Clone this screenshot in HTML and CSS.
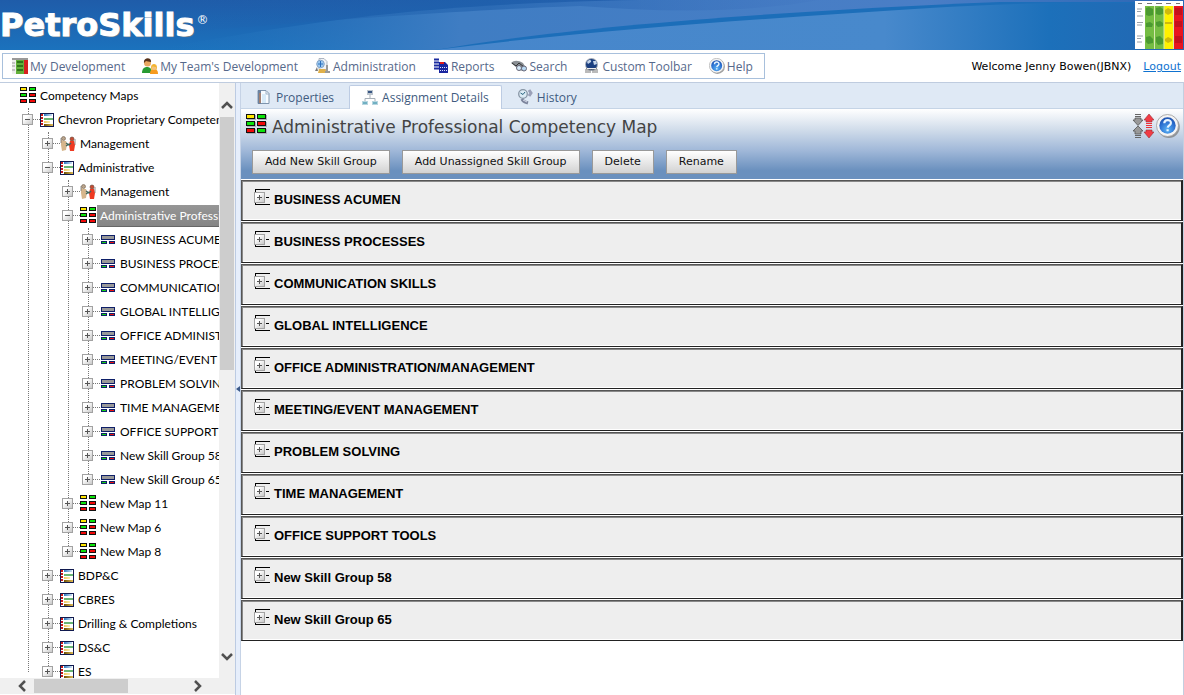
FILE: index.html
```html
<!DOCTYPE html>
<html lang="en">
<head>
<meta charset="utf-8">
<title>PetroSkills - Competency Maps</title>
<link rel="stylesheet" href="styles.css">
</head>
<body>
<svg class="defs" aria-hidden="true">
  <defs>
    <linearGradient id="gTog" x1="0" y1="0" x2="1" y2="1"><stop offset="0.3" stop-color="#fff"/><stop offset="1" stop-color="#c4c4c4"/></linearGradient>
    <radialGradient id="gBlue" cx="0.5" cy="0.75" r="0.8"><stop offset="0" stop-color="#5cb4f6"/><stop offset="0.6" stop-color="#2a6fd0"/><stop offset="1" stop-color="#1c4ba6"/></radialGradient>
    <linearGradient id="gB1"><stop offset="0" stop-color="#2e78c0"/><stop offset="1" stop-color="#cfe4f6"/></linearGradient>
    <linearGradient id="gB2"><stop offset="0" stop-color="#f0c860"/><stop offset="1" stop-color="#fff0b0"/></linearGradient>
    <linearGradient id="gB3"><stop offset="0" stop-color="#6e4e00"/><stop offset="1" stop-color="#e0bc58"/></linearGradient>
  </defs>
  <symbol id="plus" viewBox="0 0 11 12"><rect x=".5" y=".5" width="10" height="10" fill="url(#gTog)" stroke="#a2a2a2"/><path d="M3 5.5h5M5.500 3v5" stroke="#555"/></symbol>
  <symbol id="minus" viewBox="0 0 11 12"><rect x=".5" y=".5" width="10" height="10" fill="url(#gTog)" stroke="#a2a2a2"/><path d="M3 5.5h5" stroke="#555"/></symbol>
  <symbol id="map" viewBox="0 0 16 18">
    <path d="M0 0h7v4H0zM9 0h7v4H9zM0 6h7v4H0zM9 6h7v4H9zM0 12h7v4H0zM9 12h7v4H9z" fill="#111"/>
    <path d="M1 1h5v2H1z" fill="#ffe600"/><path d="M10 1h5v2h-5zM1 7h5v2H1z" fill="#0be30b"/><path d="M10 7h5v2h-5zM1 13h5v2H1zM10 13h5v2h-5z" fill="#f00808"/>
  </symbol>
  <symbol id="bigmap" viewBox="0 0 22 20">
    <path d="M1 1h9v5H1zM12 1h9v5H12zM1 8h9v5H1zM12 8h9v5H12zM1 15h9v5H1zM12 15h9v5H12z" fill="#a9b0b8"/>
    <path d="M0 0h9v5H0zM11 0h9v5h-9zM0 7h9v5H0zM11 7h9v5h-9zM0 14h9v5H0zM11 14h9v5h-9z" fill="#111"/>
    <path d="M1 1h7v3H1z" fill="#ffe600"/><path d="M12 1h7v3h-7zM1 8h7v3H1zM12 15h7v3h-7z" fill="#0be30b"/><path d="M12 8h7v3h-7zM1 15h7v3H1z" fill="#f00808"/>
  </symbol>
  <symbol id="list" viewBox="0 0 14 14">
    <rect x=".5" y=".5" width="13" height="13" fill="#fff" stroke="#10194e"/>
    <path d="M2 1v12" stroke="#c81818" stroke-width="2" stroke-dasharray="2 1"/>
    <path fill="url(#gB1)" d="M4 1h8v2H4z"/><path fill="#69b573" d="M4 5h9v2H4z"/><path fill="url(#gB2)" d="M4 8h6v2H4z"/><path fill="url(#gB3)" d="M4 11h9v2H4z"/>
  </symbol>
  <symbol id="group" viewBox="0 0 16 10">
    <path d="M1 0h14v5H1zM1 6h6v3H1zM9 6h6v3H9z" fill="#0e1f68"/><path d="M2 1h12v3H2z" fill="#999"/><path d="M2 7h4v1H2z" fill="#12d612"/><path d="M10 7h4v1h-4z" fill="#f01010"/>
  </symbol>
  <symbol id="mgmt" viewBox="0 0 16 16">
    <circle cx="3.500" cy="2.500" r="2" fill="#b9a48c" stroke="#6d5c4a" stroke-width=".6"/><circle cx="12" cy="3" r="2" fill="#c74b32" stroke="#5b4033" stroke-width=".6"/>
    <path d="M1 3l2 2 3 0 1 3-1 6-4 1-1-6z" fill="#d6b68c"/><path d="M10 5l4 0 1 4-1 6-4 0-1-6z" fill="#ee3a22"/><path d="M1 2v5M15 3v6" stroke="#777" stroke-width=".8"/>
    <path d="M6 7l3 2 2-2M6 10l3-2" stroke="#3c655c" fill="none" stroke-width="1.300"/>
  </symbol>
  <symbol id="help" viewBox="0 0 24 24">
    <circle cx="12.800" cy="13" r="11" fill="#777" opacity=".7"/><circle cx="11.500" cy="11.500" r="11" fill="#f4f4f4" stroke="#999" stroke-width=".8"/>
    <circle cx="11.500" cy="11.500" r="8.200" fill="url(#gBlue)"/><path d="M8.300 9.300c0-4.300 6.700-4.200 6.600-.4 0 2.400-3 2.400-3.200 4.700M11.600 15.200v2" fill="none" stroke="#e8f5ff" stroke-width="2.200"/>
  </symbol>
  <symbol id="rowtog" viewBox="0 0 16 16"><path d="M1 .5h15M1 15.500h15M1.500 0v4M1.500 13v3M12 8.500h3" stroke="#000" fill="none"/><svg x="0" y="3" width="11" height="12"><use href="#plus"/></svg></symbol>
</svg>

<header class="banner">
  <svg class="banner-art" viewBox="0 0 1184 50" preserveAspectRatio="none" aria-hidden="true">
    <defs>
      <linearGradient id="bg" x1="0" x2="0" y1="0" y2="1"><stop offset="0" stop-color="#1f5ca9"/><stop offset="1" stop-color="#1b72bd"/></linearGradient>
      <linearGradient id="sw1" x1="0" x2="1"><stop offset="0" stop-color="#1b74be" stop-opacity="0"/><stop offset=".3" stop-color="#3f7dc3"/><stop offset=".75" stop-color="#4a7ec6"/><stop offset="1" stop-color="#2b66b4"/></linearGradient>
      <linearGradient id="sw2" x1="0" x2="1"><stop offset="0" stop-color="#4786cb"/><stop offset=".6" stop-color="#4889cc"/><stop offset=".82" stop-color="#1c70ba"/><stop offset="1" stop-color="#2466b1"/></linearGradient>
      <linearGradient id="top" x1="0" x2="1"><stop offset="0" stop-color="#2060ad" stop-opacity="0"/><stop offset=".5" stop-color="#2061ad"/><stop offset="1" stop-color="#3b6dbc" stop-opacity=".2"/></linearGradient>
    </defs>
    <rect width="1184" height="50" fill="url(#bg)"/>
    <path d="M150 50C320 20 420 4 640 0H1184V50z" fill="url(#sw1)"/>
    <path d="M160 0H820C740 14 660 12 580 6C460 10 330 20 160 34z" fill="url(#top)" opacity=".65"/>
    <path d="M435 50C560 28 760 12 1000 2H1184V50z" fill="#1c6eb9"/>
    <path d="M435 50C600 29 760 19 930 8C1010 3 1100 1 1184 5V50z" fill="url(#sw2)"/>
  </svg>
  <h1 class="logo">PetroSkills<sup>®</sup></h1>
  <svg class="matrix" viewBox="0 0 48 48" aria-hidden="true">
    <path fill="#fff" d="M0 0h48v48H0z"/><path fill="#75bd43" d="M10 5h19v43H10z"/><path fill="#fff100" d="M29 5h9v43h-9z"/><path fill="#e8151f" d="M39 5h9v43h-9z"/>
    <path d="M19.500 5v43M29 5v43M38.500 5v43" stroke="#d6e8b0"/>
    <path d="M3 2.500h4M12 2.500h5M21 2.500h6M31 2.500h5M41 2.500h4" stroke="#777"/>
    <path d="M2 8h5M2 10.500h4M2 15h6M2 21.500h6M2 24h5M2 35h6M2 37.500h4M2 41h5" stroke="#9aa0a8"/>
    <path d="M11 7l3-1 4 2v6l-4 1-3-1zM21 7l4-1 3 2v5l-4 1-3-1zM11 22l4-1 3 2-1 3-6 0zM21 21l4-1 3 2v3l-5 1-2-2zM11 36l4-1 3 3v4l-5 1-2-2zM21 36l4-1 3 3v5l-5 1-2-3z" fill="#4b9a30"/>
    <path d="M30 9l3-2 4 2v3l-4 2-3-2zM30 21h7v2h-7zM30 38l3-2 4 2v2l-4 2-3-2z" fill="#cfb90c"/><path d="M40 7h7v7h-7zM40 20h7v6h-7zM40 35h7v7h-7z" fill="#c4101d"/>
  </svg>
</header>

<div class="topbar">
  <nav class="menu">
    <a href="#"><svg viewBox="0 0 16 16"><path fill="#eee" d="M0 0h16v16H0z"/><path fill="#62b03a" d="M4 2h8v14H4z"/><path fill="#d62020" d="M12 2h4v14h-4z"/><path d="M0 1h16" stroke="#444"/><path d="M5 4h6M5 8h6M5 12h6" stroke="#30751b" stroke-width="2"/><path d="M0 5h3M0 8h3M0 12h3" stroke="#999"/></svg>My Development</a>
    <a href="#"><svg viewBox="0 0 16 16"><path d="M0 15c0-4 2-6 5-6s5 2 5 6z" fill="#279a32"/><circle cx="5.500" cy="5" r="3.500" fill="#e8a862"/><path d="M2 5c-1-6 8-6 7-1-2 0-4-1-5-1z" fill="#55311a"/><path d="M8 16c0-3 1-5 4-5s4 2 4 5z" fill="#f79b1e"/><circle cx="12" cy="9" r="3" fill="#f4c27b"/><path d="M9 13c-1-9 7-9 6 0l-1-4c-2 0-3-1-4 0z" fill="#f4b62c"/></svg>My Team's Development</a>
    <a href="#"><svg viewBox="0 0 16 16"><path d="M4 .5h5l3 3v8H4z" fill="#f1f3f6" stroke="#9aa4b4" stroke-width=".8"/><circle cx="5.500" cy="6" r="3.800" fill="#9cc9f2" stroke="#86a5c6"/><path d="M5.500 3v6M3 6h5" stroke="#2d70bd"/><path d="M2 9l-2 4h3z" fill="#777"/><path d="M4 11h6l3 4H3z" fill="#dfb04a"/><path d="M12 7v7M10 14h5" stroke="#999" stroke-width="2" fill="none"/></svg>Administration</a>
    <a href="#"><svg viewBox="0 0 16 16"><path fill="#fff" d="M1 1h6v12H1z"/><path d="M1 1.500h5M1 4.500h5M1 7.500h5M1 10.500h5" stroke="#1c2ca0" stroke-width="2"/><path d="M6 4h6l3 3v8H6z" fill="#1825a0"/><path d="M7 5h4" stroke="#e01b1b" stroke-width="2"/><path d="M7 9.500h7M7 12.500h7" stroke="#dfe4ff" stroke-dasharray="1 1"/></svg>Reports</a>
    <a href="#"><svg viewBox="0 0 16 16"><path d="M0 5c3-3 7-3 12 0l3 5-3 3-4-1-3-3z" fill="#8a8f94"/><path d="M1 5l4 3 3-3 5 4" stroke="#333" fill="none"/><circle cx="8" cy="10" r="2.500" fill="#d5e9f8" stroke="#667"/><circle cx="13" cy="10.500" r="2.500" fill="#b7d8f2" stroke="#667"/></svg>Search</a>
    <a href="#"><svg viewBox="0 0 16 16"><circle cx="7.500" cy="6.500" r="6.500" fill="#9fa8b5"/><circle cx="7.500" cy="6.500" r="5.500" fill="#1b3f80"/><path d="M3 4c2-3 5-2 4 0l-3 2zM9 3l3 0 1 3-3 1z" fill="#c5d5ea"/><path d="M2 15v-4l2-1v5M6 15v-4h3v4M11 15v-5l2 1v4" stroke="#777" fill="none"/><path d="M3 10.500h9" stroke="#eee"/></svg>Custom Toolbar</a>
    <a href="#"><svg viewBox="0 0 24 24"><use href="#help"/></svg>Help</a>
  </nav>
  <div class="user"><span>Welcome Jenny Bowen(JBNX)</span><a href="#">Logout</a></div>
</div>

<div class="work">
  <aside class="side">
    <div class="tree-row-area">
      <div class="tree-view">
        <div class="node root"><svg class="i-map"><use href="#map"/></svg><a href="#">Competency Maps</a></div>
        <ul class="tree first">
          <li><div class="node"><button class="tog" aria-label="Collapse"><svg><use href="#minus"/></svg></button><svg class="i-list"><use href="#list"/></svg><a href="#">Chevron Proprietary Competencies</a></div>
            <ul class="tree">
              <li><div class="node"><button class="tog" aria-label="Expand"><svg><use href="#plus"/></svg></button><svg class="i-mgmt"><use href="#mgmt"/></svg><a href="#">Management</a></div></li>
              <li><div class="node"><button class="tog" aria-label="Collapse"><svg><use href="#minus"/></svg></button><svg class="i-list"><use href="#list"/></svg><a href="#">Administrative</a></div>
                <ul class="tree">
                  <li><div class="node"><button class="tog" aria-label="Expand"><svg><use href="#plus"/></svg></button><svg class="i-mgmt"><use href="#mgmt"/></svg><a href="#">Management</a></div></li>
                  <li><div class="node"><button class="tog" aria-label="Collapse"><svg><use href="#minus"/></svg></button><svg class="i-map"><use href="#map"/></svg><a class="selected" href="#">Administrative Professional</a></div>
                    <ul class="tree">
                      <li><div class="node"><button class="tog" aria-label="Expand"><svg><use href="#plus"/></svg></button><svg class="i-group"><use href="#group"/></svg><a href="#">BUSINESS ACUMEN</a></div></li>
                      <li><div class="node"><button class="tog" aria-label="Expand"><svg><use href="#plus"/></svg></button><svg class="i-group"><use href="#group"/></svg><a href="#">BUSINESS PROCESSES</a></div></li>
                      <li><div class="node"><button class="tog" aria-label="Expand"><svg><use href="#plus"/></svg></button><svg class="i-group"><use href="#group"/></svg><a href="#">COMMUNICATION SKILLS</a></div></li>
                      <li><div class="node"><button class="tog" aria-label="Expand"><svg><use href="#plus"/></svg></button><svg class="i-group"><use href="#group"/></svg><a href="#">GLOBAL INTELLIGENCE</a></div></li>
                      <li><div class="node"><button class="tog" aria-label="Expand"><svg><use href="#plus"/></svg></button><svg class="i-group"><use href="#group"/></svg><a href="#">OFFICE ADMINISTRATION</a></div></li>
                      <li><div class="node"><button class="tog" aria-label="Expand"><svg><use href="#plus"/></svg></button><svg class="i-group"><use href="#group"/></svg><a href="#">MEETING/EVENT MANAGEMENT</a></div></li>
                      <li><div class="node"><button class="tog" aria-label="Expand"><svg><use href="#plus"/></svg></button><svg class="i-group"><use href="#group"/></svg><a href="#">PROBLEM SOLVING</a></div></li>
                      <li><div class="node"><button class="tog" aria-label="Expand"><svg><use href="#plus"/></svg></button><svg class="i-group"><use href="#group"/></svg><a href="#">TIME MANAGEMENT</a></div></li>
                      <li><div class="node"><button class="tog" aria-label="Expand"><svg><use href="#plus"/></svg></button><svg class="i-group"><use href="#group"/></svg><a href="#">OFFICE SUPPORT TOOLS</a></div></li>
                      <li><div class="node"><button class="tog" aria-label="Expand"><svg><use href="#plus"/></svg></button><svg class="i-group"><use href="#group"/></svg><a href="#">New Skill Group 58</a></div></li>
                      <li><div class="node"><button class="tog" aria-label="Expand"><svg><use href="#plus"/></svg></button><svg class="i-group"><use href="#group"/></svg><a href="#">New Skill Group 65</a></div></li>
                    </ul>
                  </li>
                  <li><div class="node"><button class="tog" aria-label="Expand"><svg><use href="#plus"/></svg></button><svg class="i-map"><use href="#map"/></svg><a href="#">New Map 11</a></div></li>
                  <li><div class="node"><button class="tog" aria-label="Expand"><svg><use href="#plus"/></svg></button><svg class="i-map"><use href="#map"/></svg><a href="#">New Map 6</a></div></li>
                  <li><div class="node"><button class="tog" aria-label="Expand"><svg><use href="#plus"/></svg></button><svg class="i-map"><use href="#map"/></svg><a href="#">New Map 8</a></div></li>
                </ul>
              </li>
              <li><div class="node"><button class="tog" aria-label="Expand"><svg><use href="#plus"/></svg></button><svg class="i-list"><use href="#list"/></svg><a href="#">BDP&amp;C</a></div></li>
              <li><div class="node"><button class="tog" aria-label="Expand"><svg><use href="#plus"/></svg></button><svg class="i-list"><use href="#list"/></svg><a href="#">CBRES</a></div></li>
              <li><div class="node"><button class="tog" aria-label="Expand"><svg><use href="#plus"/></svg></button><svg class="i-list"><use href="#list"/></svg><a href="#">Drilling &amp; Completions</a></div></li>
              <li><div class="node"><button class="tog" aria-label="Expand"><svg><use href="#plus"/></svg></button><svg class="i-list"><use href="#list"/></svg><a href="#">DS&amp;C</a></div></li>
              <li><div class="node"><button class="tog" aria-label="Expand"><svg><use href="#plus"/></svg></button><svg class="i-list"><use href="#list"/></svg><a href="#">ES</a></div></li>
            </ul>
          </li>
        </ul>
      </div>
      <div class="vbar">
        <svg viewBox="0 0 12 8"><path d="M1 7l5-5 5 5" fill="none" stroke="#505050" stroke-width="2.500"/></svg>
        <div class="vtrack"><div class="vthumb"></div></div>
        <svg viewBox="0 0 12 8"><path d="M1 1l5 5 5-5" fill="none" stroke="#505050" stroke-width="2.500"/></svg>
      </div>
    </div>
    <div class="hbar">
      <svg viewBox="0 0 8 12"><path d="M7 1L2 6l5 5" fill="none" stroke="#505050" stroke-width="2.500"/></svg>
      <div class="htrack"><div class="hthumb"></div></div>
      <svg viewBox="0 0 8 12"><path d="M1 1l5 5-5 5" fill="none" stroke="#505050" stroke-width="2.500"/></svg>
    </div>
  </aside>
  <div class="splitter"><svg viewBox="0 0 4 6"><path d="M4 0L0 3l4 3z" fill="#3c5a8a"/></svg></div>

  <main class="main">
    <nav class="tabs">
      <a href="#"><svg viewBox="0 0 16 16"><path d="M2 1.500h8l3 3v10H2z" fill="#f7fbff" stroke="#7f95ad"/><path d="M2 1h3v14H2z" fill="#6c83a0"/><path d="M4 4v10" stroke="#d77d42"/><path d="M10 2v3h3" fill="none" stroke="#9eb1c6"/><path d="M6 5h4v9H6z" fill="#d7eaf8"/></svg>Properties</a>
      <a href="#" class="active"><svg viewBox="0 0 16 16"><path d="M8 5v4M3 12V8.500h10v3.500" fill="none" stroke="#a5aeb7"/><path d="M5 0h6v5H5z" fill="#bcc5ce"/><path d="M6 1h4v2H6z" fill="#385582"/><path d="M0 11h6v4H0zM10 11h6v4h-6z" fill="#b7d5df"/><path d="M1 13h4M11 13h4" stroke="#2b8ca7"/></svg>Assignment Details</a>
      <a href="#"><svg viewBox="0 0 16 16"><circle cx="6" cy="5" r="4.300" fill="#dcebf5" stroke="#8795a4" stroke-width="1.300"/><path d="M3.500 4L6 5.500 8 3" stroke="#2a6680" fill="none"/><path d="M12 1l2 3-2 3" stroke="#9aa0b8" stroke-width="3" fill="none"/><path d="M5 10c1 3 3 3 6 4" stroke="#7c849c" stroke-width="3" fill="none"/><path d="M6 11l4 2" stroke="#d7dbea"/></svg>History</a>
    </nav>
    <section class="head">
      <div class="title-line">
        <svg class="i-big"><use href="#bigmap"/></svg>
        <h2>Administrative Professional Competency Map</h2>
        <button class="icon-btn" aria-label="Expand or collapse all"><svg class="i-arrows" viewBox="0 0 22 24">
          <path d="M3 .5h6M3 2.500h6M3 21.500h6M3 23.500h6" stroke="#666"/><path d="M3 4h6v2h2l-5 5.500L1 6h2z" fill="#999" stroke="#555" stroke-width=".8"/><path d="M3 20h6v-3h2l-5-5-5 5h2z" fill="#999" stroke="#555" stroke-width=".8"/>
          <path d="M17 0l5 6h-2v2h-6V6h-2z" fill="#f13b45" stroke="#9b3138" stroke-width=".6"/><path d="M14 9.500h6M14 11.500h6M14 13.500h6" stroke="#ee3039"/><path d="M17 24l5-6h-2v-2h-6v2h-2z" fill="#f13b45" stroke="#9b3138" stroke-width=".6"/>
        </svg></button>
        <button class="icon-btn" aria-label="Help"><svg class="i-help"><use href="#help"/></svg></button>
      </div>
      <div class="actions"><button>Add New Skill Group</button><button>Add Unassigned Skill Group</button><button>Delete</button><button>Rename</button></div>
    </section>
    <ul class="groups">
      <li><button aria-label="Expand"><svg><use href="#rowtog"/></svg></button>BUSINESS ACUMEN</li>
      <li><button aria-label="Expand"><svg><use href="#rowtog"/></svg></button>BUSINESS PROCESSES</li>
      <li><button aria-label="Expand"><svg><use href="#rowtog"/></svg></button>COMMUNICATION SKILLS</li>
      <li><button aria-label="Expand"><svg><use href="#rowtog"/></svg></button>GLOBAL INTELLIGENCE</li>
      <li><button aria-label="Expand"><svg><use href="#rowtog"/></svg></button>OFFICE ADMINISTRATION/MANAGEMENT</li>
      <li><button aria-label="Expand"><svg><use href="#rowtog"/></svg></button>MEETING/EVENT MANAGEMENT</li>
      <li><button aria-label="Expand"><svg><use href="#rowtog"/></svg></button>PROBLEM SOLVING</li>
      <li><button aria-label="Expand"><svg><use href="#rowtog"/></svg></button>TIME MANAGEMENT</li>
      <li><button aria-label="Expand"><svg><use href="#rowtog"/></svg></button>OFFICE SUPPORT TOOLS</li>
      <li><button aria-label="Expand"><svg><use href="#rowtog"/></svg></button>New Skill Group 58</li>
      <li><button aria-label="Expand"><svg><use href="#rowtog"/></svg></button>New Skill Group 65</li>
    </ul>
  </main>
</div>
</body>
</html>
```
FILE: styles.css
```css
* { box-sizing: border-box; }
body {
  margin: 0;
  height: 100vh;
  display: flex;
  flex-direction: column;
  overflow: hidden;
  background: #fff;
  font-family: "Open Sans", "Noto Sans", sans-serif;
  font-size: 12px;
  color: #000;
}
ul { list-style: none; margin: 0; padding: 0; }
a { color: inherit; text-decoration: none; }
button { font: inherit; cursor: pointer; }
svg { display: block; flex: none; }
.defs { position: absolute; width: 0; height: 0; }

/* Banner */
.banner {
  position: relative;
  flex: none;
  height: 50px;
  display: flex;
  align-items: center;
  justify-content: space-between;
  overflow: hidden;
}
.banner-art { position: absolute; inset: 0; width: 100%; height: 100%; }
.logo {
  position: relative;
  display: flex;
  align-items: flex-start;
  gap: 2px;
  margin: 0;
  color: #fff;
  font: bold 32px/50px "DejaVu Sans", sans-serif;
  -webkit-text-stroke: 1px #fff;
  text-shadow: 1px 1px 1px #7b7f86;
}
.logo sup {
  font: 12px/40px "DejaVu Sans", sans-serif;
  -webkit-text-stroke: 0;
  text-shadow: none;
}
.matrix { position: relative; width: 48px; height: 48px; margin-right: 1px; }

/* Menu bar */
.topbar {
  flex: none;
  height: 32px;
  display: flex;
  align-items: center;
  justify-content: space-between;
  padding: 0 3px 0 2px;
}
.menu {
  display: flex;
  align-items: center;
  height: 26px;
  padding: 0 2px 0 1px;
  border: 1px solid #a8c0dc;
  color: #56698b;
}
.menu a { display: flex; align-items: center; gap: 2px; padding: 0 9px 0 8px; }
.menu svg { width: 16px; height: 16px; }
.user {
  display: flex;
  gap: 12px;
  font: 11px/16px "DejaVu Sans", sans-serif;
  padding-top: 2px;
}
.user a { color: #0f72d0; text-decoration: underline; }

/* Work area */
.work {
  flex: 1;
  min-height: 0;
  display: flex;
  border-top: 1px solid #bfccdf;
  border-right: 1px solid #c3cfe0;
}
.side { flex: none; width: 235px; display: flex; flex-direction: column; padding-bottom: 1px; }
.tree-row-area { flex: 1; min-height: 0; display: flex; }
.tree-view {
  flex: 1;
  min-width: 0;
  overflow: hidden;
  padding-top: 1px;
  white-space: nowrap;
  font-family: Lato, "Open Sans", sans-serif;
}

.tree { position: relative; margin-left: 20px; }
.tree.first { margin-left: 28px; }
.tree::before {
  content: "";
  position: absolute;
  left: 0;
  top: 0;
  bottom: 12px;
  border-left: 1px dotted #777;
}
.node {
  position: relative;
  display: flex;
  align-items: center;
  height: 24px;
  margin-left: -6px;
  gap: 4px;
}
.node a { flex: none; padding-bottom: 1px; }
.node.root { margin-left: 20px; }
.tog {
  flex: none;
  display: flex;
  align-items: flex-start;
  width: 18px;
  height: 12px;
  margin-right: -4px;
  padding: 0;
  border: 0;
  background: none;
}
.tog::after { content: ""; flex: 1; margin-top: 5px; border-top: 1px dotted #777; }
.tog svg { width: 11px; height: 12px; }
.i-map { width: 16px; height: 18px; }
.i-list { width: 14px; height: 14px; }
.i-mgmt { width: 16px; height: 16px; }
.i-group { width: 16px; height: 10px; }
.node .selected {
  margin-left: -3px;
  padding: 0 3px;
  line-height: 21px;
  color: #fff;
  background: linear-gradient(#969696, #858585);
  border-bottom: 1px solid #666;
}

.vbar {
  width: 16px;
  display: flex;
  flex-direction: column;
  align-items: center;
  gap: 8px;
  padding: 18px 0 17px;
  background: #f0f0f0;
}
.vbar svg { width: 12px; height: 8px; }
.vtrack { flex: 1; width: 14px; }
.vthumb { height: 48%; background: #cdcdcd; }
.hbar {
  height: 16px;
  flex: none;
  display: flex;
  align-items: center;
  gap: 8px;
  padding: 0 33px 0 18px;
  background: #f0f0f0;
}
.hbar svg { width: 8px; height: 12px; }
.htrack { flex: 1; }
.hthumb { width: 62%; height: 14px; background: #cdcdcd; }

.splitter {
  flex: none;
  width: 6px;
  display: flex;
  align-items: center;
  justify-content: center;
  background: #e6eefb;
  border-left: 1px solid #bccbe2;
  border-right: 1px solid #c6d3e6;
}
.splitter svg { width: 4px; height: 6px; }

/* Main panel */
.main { flex: 1; min-width: 0; display: flex; flex-direction: column; }
.tabs {
  height: 26px;
  display: flex;
  align-items: stretch;
  padding: 2px 0 0 4px;
  background: #dfe9f5;
  border-bottom: 1px solid #c5d4e6;
  color: #405b80;
}
.tabs a {
  display: flex;
  align-items: center;
  gap: 4px;
  padding: 0 14px 0 10px;
  border: 1px solid transparent;
  border-bottom: 0;
}
.tabs a.active {
  margin-bottom: -1px;
  background: #fff;
  border-color: #bdcce3;
  border-radius: 2px 2px 0 0;
}
.tabs svg { width: 16px; height: 16px; }
.tabs a.active { padding: 0 12px; }
.tabs a.active + a { padding-left: 14px; }

.head {
  height: 71px;
  display: flex;
  flex-direction: column;
  justify-content: space-between;
  padding: 3px 3px 5px 5px;
  background: linear-gradient(#fff, #d0dcea 30%, #9fb7d8 60%, #6a90be 88%);
  border-bottom: 1px solid #fff;
}
.title-line { display: flex; align-items: center; height: 28px; }
.title-line h2 {
  flex: 1;
  margin: 0 0 0 4px;
  font: 17px/24px "DejaVu Sans", sans-serif;
  padding-top: 2px;
  color: #444;
}
.i-big { width: 22px; height: 20px; margin-bottom: 4px; }
.icon-btn { padding: 0; border: 0; background: none; margin-left: 2px; }
.i-arrows { width: 22px; height: 24px; }
.i-help { width: 24px; height: 24px; }
.actions { display: flex; gap: 12px; padding-left: 6px; }
.actions button {
  height: 24px;
  padding: 0 12px;
  border: 1px solid #999;
  background: linear-gradient(#fff, #d2d2d2);
  font: 11px/20px "DejaVu Sans", sans-serif;
  color: #111;
}

.groups { display: flex; flex-direction: column; gap: 1px; }
.groups li {
  display: flex;
  align-items: center;
  gap: 4px;
  height: 41px;
  padding: 0 12px 2px;
  background: #eee;
  border: 1px solid #222;
  border-top-color: #555;
  border-left-color: #555;
  border-right-width: 2px;
  box-shadow: inset 1px 1px #888, inset 0 -1px #fff;
  font: bold 13px/16px "Liberation Sans", Arial, sans-serif;
}
.groups button { padding: 0 0 5px; border: 0; background: none; }
.groups svg { width: 16px; height: 16px; }
```
